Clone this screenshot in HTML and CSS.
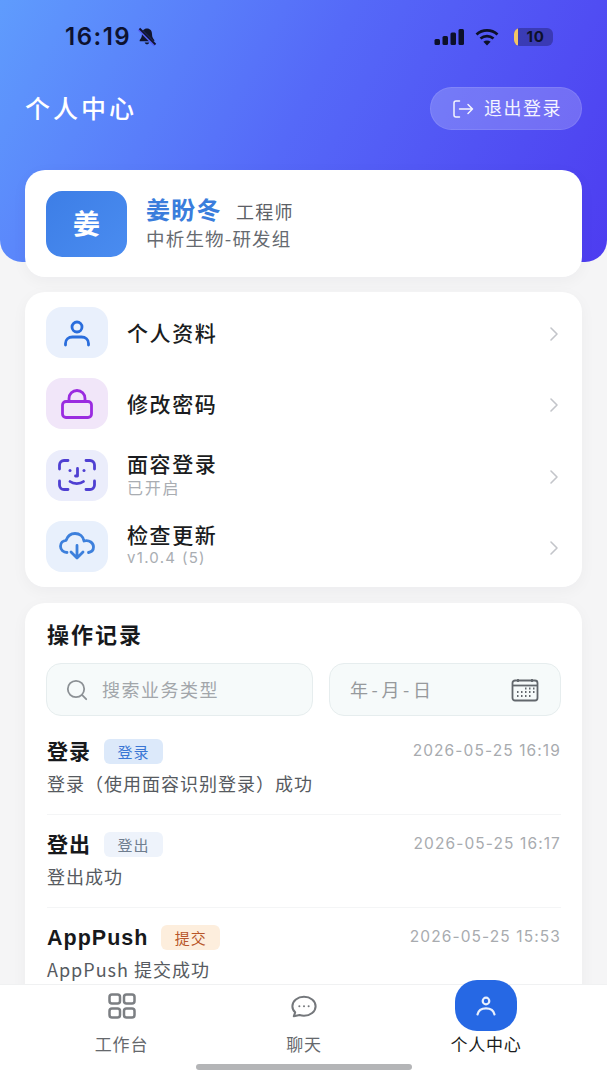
FILE: index.html
```html
<!DOCTYPE html>
<html lang="zh-CN">
<head>
<meta charset="utf-8">
<title>个人中心</title>
<link rel="stylesheet" href="styles.css">
</head>
<body>
<div class="app">
  <header class="hero">
    <div class="status">
      <div class="status-left">
        <span class="clock">16:19</span>
        <svg class="bell" viewBox="0 0 20 20" width="20" height="20"><path d="M10 1.500c-3.200 0-5 2.400-5 5.400 0 3.400-1.300 4.800-2.300 6v1.300h14.600V12.900c-1-1.200-2.300-2.600-2.300-6 0-3-1.800-5.400-5-5.400z" fill="#10152e"/><path d="M7.600 15.600a2.500 2.500 0 0 0 4.800 0z" fill="#10152e"/><path d="M2 2l16 16" stroke="#5560f5" stroke-width="3.600"/><path d="M2.500 1.500l16 16" stroke="#10152e" stroke-width="1.800"/></svg>
      </div>
      <div class="status-right">
        <svg viewBox="0 0 30 18" width="31" height="18" fill="#0c1029"><rect x="0" y="11" width="5.500" height="6" rx="1.500"/><rect x="8" y="8" width="5.500" height="9" rx="1.500"/><rect x="16" y="4.500" width="5.500" height="12.500" rx="1.500"/><rect x="24" y="1" width="5.500" height="16" rx="1.500"/></svg>
        <svg class="wifi" viewBox="0 0 24 18" width="24" height="18" fill="none" stroke="#0c1029" stroke-width="2.800"><path d="M1.500 6.500c6-5.500 15-5.500 21 0"/><path d="M5.500 10.500c3.800-3.300 9.200-3.300 13 0"/><path d="M12 17.500l-3.600-3.800c2-1.700 5.200-1.700 7.200 0z" fill="#0c1029" stroke="none"/></svg>
        <div class="battery"><span class="battery-level"></span><span class="battery-num">10</span></div>
      </div>
    </div>
    <div class="hero-bar">
      <h1 class="hero-title">个人中心</h1>
      <button class="logout">
        <svg viewBox="0 0 22 20" width="22" height="20" fill="none" stroke="#fff" stroke-width="1.500" stroke-linecap="round" stroke-linejoin="round" opacity=".92"><path d="M7.500 2H4a2 2 0 0 0-2 2v12a2 2 0 0 0 2 2h3.500"/><path d="M7.500 10h13M16 5.500l4.500 4.500-4.500 4.500"/></svg>
        <span class="logout-text">退出登录</span>
      </button>
    </div>
  </header>

  <main class="content">
    <section class="card profile">
      <div class="avatar">姜</div>
      <div class="profile-info">
        <div class="profile-name"><strong>姜盼冬</strong><span>工程师</span></div>
        <div class="profile-org">中析生物-研发组</div>
      </div>
    </section>

    <section class="card menu">
      <a class="menu-row">
        <span class="tile tile-blue"><svg viewBox="0 0 28 28" width="28" height="28" fill="none" stroke="#2a6ddc" stroke-width="2.800" stroke-linecap="round"><circle cx="14" cy="8" r="5"/><path d="M2.500 26v-1.500c0-4 3-6.500 7-6.500h9c4 0 7 2.500 7 6.500V26"/></svg></span>
        <span class="menu-text"><span class="menu-label">个人资料</span></span>
        <svg class="chev" viewBox="0 0 10 16" width="10" height="16" fill="none" stroke="#c3c5ca" stroke-width="1.600" stroke-linecap="round" stroke-linejoin="round"><path d="M2 2l6 6-6 6"/></svg>
      </a>
      <a class="menu-row">
        <span class="tile tile-violet"><svg viewBox="0 0 32 30" width="32" height="30" fill="none" stroke="#9a2be0" stroke-width="2.800" stroke-linejoin="round"><rect x="1.500" y="12.500" width="29" height="16" rx="3.500"/><path d="M8 12.500V9.500a8 8 0 0 1 16 0v3"/></svg></span>
        <span class="menu-text"><span class="menu-label">修改密码</span></span>
        <svg class="chev" viewBox="0 0 10 16" width="10" height="16" fill="none" stroke="#c3c5ca" stroke-width="1.600" stroke-linecap="round" stroke-linejoin="round"><path d="M2 2l6 6-6 6"/></svg>
      </a>
      <a class="menu-row">
        <span class="tile tile-indigo"><svg viewBox="0 0 38 32" width="38" height="32" fill="none" stroke="#4f3fd2" stroke-width="2.800" stroke-linecap="round" stroke-linejoin="round"><path d="M1.500 10V6a4.500 4.500 0 0 1 4.500-4.500h4M28 1.500h4A4.500 4.500 0 0 1 36.500 6v4M36.500 22v4a4.500 4.500 0 0 1-4.500 4.500h-4M10 30.500H6A4.500 4.500 0 0 1 1.500 26v-4"/><path d="M19.500 9.500v7.500h-2"/><path d="M12 22.500c3.500 2.800 10 2.800 13.500 0"/><circle cx="12" cy="11.500" r="1.500" fill="#4f3fd2" stroke="none"/><circle cx="26" cy="11.500" r="1.500" fill="#4f3fd2" stroke="none"/></svg></span>
        <span class="menu-text"><span class="menu-label">面容登录</span><span class="menu-sub">已开启</span></span>
        <svg class="chev" viewBox="0 0 10 16" width="10" height="16" fill="none" stroke="#c3c5ca" stroke-width="1.600" stroke-linecap="round" stroke-linejoin="round"><path d="M2 2l6 6-6 6"/></svg>
      </a>
      <a class="menu-row">
        <span class="tile tile-sky"><svg viewBox="0 0 36 28" width="36" height="28" fill="none" stroke="#3d80dc" stroke-width="2.800" stroke-linecap="round" stroke-linejoin="round"><path d="M8 20.500c-3.500 0-6.500-2.500-6.500-6.200 0-3.400 2.600-5.800 5.600-6C8.600 4 12.300 1.500 16 1.500c4.700 0 8.300 3.200 9 7.500 5.500-1.300 9.500 2 9.500 6 0 3-2 5-5 5.500"/><path d="M18 13.500v12M12 20l6 6 6-6"/></svg></span>
        <span class="menu-text"><span class="menu-label">检查更新</span><span class="menu-sub menu-ver">v1.0.4 (5)</span></span>
        <svg class="chev" viewBox="0 0 10 16" width="10" height="16" fill="none" stroke="#c3c5ca" stroke-width="1.600" stroke-linecap="round" stroke-linejoin="round"><path d="M2 2l6 6-6 6"/></svg>
      </a>
    </section>

    <section class="card records">
      <h2 class="records-title">操作记录</h2>
      <div class="filters">
        <div class="field field-search">
          <svg viewBox="0 0 22 22" width="22" height="22" fill="none" stroke="#8c9195" stroke-width="1.800" stroke-linecap="round"><circle cx="10" cy="10" r="8.200"/><path d="M16.200 16.200l4 4"/></svg>
          <span class="placeholder">搜索业务类型</span>
        </div>
        <div class="field field-date">
          <span class="placeholder date-text">年-月-日</span>
          <svg viewBox="0 0 28 24" width="28" height="24" fill="none"><rect x="1.500" y="2.500" width="25" height="20" rx="2.500" stroke="#62676c" stroke-width="1.800"/><path d="M2 7.500h24" stroke="#62676c" stroke-width="1.800"/><path d="M7 1v3M21 1v3" stroke="#62676c" stroke-width="1.800"/><path d="M14 10.500h1.500M18 10.500h1.500M22 10.500h1.500M6 14h1.500M10 14h1.500M14 14h1.500M18 14h1.500M22 14h1.500M6 18h1.500M10 18h1.500M14 18h1.500M18 18h1.500" stroke="#62676c" stroke-width="1.800"/></svg>
        </div>
      </div>
      <ul class="log">
        <li class="log-item">
          <div class="log-head"><b class="log-name">登录</b><span class="tag tag-blue">登录</span><time class="log-time">2026-05-25 16:19</time></div>
          <p class="log-desc">登录（使用面容识别登录）成功</p>
        </li>
        <li class="log-item">
          <div class="log-head"><b class="log-name">登出</b><span class="tag tag-grey">登出</span><time class="log-time">2026-05-25 16:17</time></div>
          <p class="log-desc">登出成功</p>
        </li>
        <li class="log-item">
          <div class="log-head"><b class="log-name log-latin">AppPush</b><span class="tag tag-orange">提交</span><time class="log-time">2026-05-25 15:53</time></div>
          <p class="log-desc">AppPush 提交成功</p>
        </li>
      </ul>
    </section>
  </main>

  <nav class="tabbar">
    <a class="tab">
      <span class="tab-icon"><svg viewBox="0 0 28 26" width="28" height="26" fill="none" stroke="#7c7f83" stroke-width="2.500"><rect x="1.500" y="1.500" width="10.500" height="9" rx="2.500"/><rect x="16" y="1.500" width="10.500" height="9" rx="2.500"/><rect x="1.500" y="15.500" width="10.500" height="9" rx="2.500"/><rect x="16" y="15.500" width="10.500" height="9" rx="2.500"/></svg></span>
      <span class="tab-label">工作台</span>
    </a>
    <a class="tab">
      <span class="tab-icon"><svg viewBox="0 0 28 24" width="26" height="23" fill="none" stroke="#74777b" stroke-width="2.200" stroke-linejoin="round"><path d="M14 1.500c6.800 0 12.500 4.300 12.500 10.200S20.800 22 14 22c-1.800 0-3.300-.3-4.800-.8L3 22.500l1.500-4.200C2.500 16.500 1.500 14.300 1.500 11.700 1.500 5.800 7.200 1.500 14 1.500z"/><circle cx="9" cy="11.700" r="1.100" fill="#74777b" stroke="none"/><circle cx="14" cy="11.700" r="1.100" fill="#74777b" stroke="none"/><circle cx="19" cy="11.700" r="1.100" fill="#74777b" stroke="none"/></svg></span>
      <span class="tab-label">聊天</span>
    </a>
    <a class="tab tab-active">
      <span class="tab-icon"><span class="tab-pill"><svg viewBox="0 0 20 20" width="20" height="20" fill="none" stroke="#e8effc" stroke-width="2.200" stroke-linecap="round"><circle cx="10" cy="5" r="3.300"/><path d="M1.500 18.500c.8-4 4-6.200 8.500-6.200s7.700 2.200 8.500 6.200"/></svg></span></span>
      <span class="tab-label">个人中心</span>
    </a>
    <span class="home-bar"></span>
  </nav>
</div>
</body>
</html>
```

FILE: styles.css
```css
* { box-sizing: border-box; }
html, body { margin: 0; padding: 0; }
body {
  background: #f5f5f6;
  font-family: "Noto Sans CJK SC", "Noto Sans", sans-serif;
  color: #17191c;
}
.app {
  position: relative;
  width: 607px;
  height: 1080px;
  overflow: hidden;
  background: #f5f5f6;
}

/* gradient header */
.hero {
  height: 262px;
  padding: 0 25px;
  background: linear-gradient(118deg, #5f9cfd 0%, #5569f8 48%, #4d3cf0 100%);
  border-radius: 0 0 22px 22px;
}
.status {
  display: flex;
  justify-content: space-between;
  align-items: center;
  height: 28px;
  padding: 23px 29px 0 40px;
  box-sizing: content-box;
}
.status-left, .status-right { display: flex; align-items: center; }
.clock {
  font: 600 24px/28px "Inter", sans-serif;
  letter-spacing: 1.500px;
  color: #0d1230;
}
.bell { margin-left: 6px; }
.status-right { gap: 10px; }
.battery {
  display: flex;
  align-items: center;
  width: 39px;
  height: 18px;
  margin-left: 5px;
  border-radius: 6px;
  background: rgba(40, 40, 130, .55);
  overflow: hidden;
}
.battery-level { width: 4px; height: 100%; background: #f2c566; }
.battery-num {
  flex: 1;
  text-align: center;
  font: 700 15px/18px "Inter", sans-serif;
  letter-spacing: .6px;
  color: #0c1029;
}
.hero-bar {
  display: flex;
  justify-content: space-between;
  align-items: center;
  margin-top: 36px;
}
.hero-title {
  margin: -3px 0 0;
  font-size: 25px;
  font-weight: 500;
  line-height: 30px;
  letter-spacing: 3px;
  color: #fff;
}
.logout {
  display: flex;
  align-items: center;
  gap: 10px;
  width: 152px;
  height: 43px;
  padding: 0 0 0 21px;
  border: 1px solid rgba(255, 255, 255, .1);
  border-radius: 22px;
  background: rgba(255, 255, 255, .2);
  color: #f4f4ff;
  font-family: inherit;
  font-size: 18px;
  letter-spacing: 1.500px;
}
.logout-text { margin-top: -3px; }

/* cards */
.content {
  display: flex;
  flex-direction: column;
  gap: 15px;
  margin-top: -92px;
  padding: 0 25px;
}
.card {
  background: #fff;
  border-radius: 20px;
  box-shadow: 0 4px 16px rgba(20, 30, 60, .04);
}
.profile {
  display: flex;
  align-items: center;
  gap: 19px;
  height: 107px;
  padding: 0 21px;
}
.avatar {
  display: flex;
  align-items: center;
  justify-content: center;
  width: 81px;
  height: 66px;
  padding-bottom: 2px;
  border-radius: 16px;
  background: linear-gradient(135deg, #3d7ee6, #4a8cf0);
  color: #fff;
  font-size: 27px;
  font-weight: 700;
}
.profile-info { margin-bottom: 2px; }
.profile-name { display: flex; align-items: baseline; gap: 14px; height: 30px; line-height: 30px; }
.profile-name strong {
  font-size: 24px;
  font-weight: 700;
  letter-spacing: 1.300px;
  color: #3a7ddc;
}
.profile-name span {
  font-size: 18px;
  letter-spacing: 1.300px;
  color: #5c6066;
}
.profile-org {
  margin-top: 1px;
  font-size: 18.500px;
  line-height: 26px;
  letter-spacing: 1.200px;
  color: #666a70;
}

.menu {
  display: flex;
  flex-direction: column;
  gap: 20.300px;
  height: 295px;
  padding: 15px 21px;
}
.menu-row {
  display: flex;
  align-items: center;
  height: 51px;
}
.tile {
  display: flex;
  flex: none;
  align-items: center;
  justify-content: center;
  width: 62px;
  height: 51px;
  margin-right: 19px;
  border-radius: 16px;
}
.tile-blue { background: #e9f0fc; }
.tile-violet { background: #f1e6f9; }
.tile-indigo { background: #ebedfb; }
.tile-sky { background: #e8f0fc; }
.menu-text {
  display: flex;
  flex: 1;
  flex-direction: column;
  gap: 2px;
  margin-bottom: 2px;
}
.menu-label {
  font-size: 21px;
  font-weight: 500;
  line-height: 24px;
  letter-spacing: 1.600px;
  color: #1a1c20;
}
.menu-sub {
  font-size: 16px;
  line-height: 20px;
  letter-spacing: 1.700px;
  color: #a9adb2;
}
.menu-ver {
  font-family: "Inter", sans-serif;
  font-size: 15px;
  letter-spacing: 1.300px;
}
.chev { flex: none; margin: 3px 2px 0 0; }

/* operation log */
.records {
  height: 440px;
  margin-top: 1px;
  padding: 15px 21px 0 22px;
}
.records-title {
  margin: 0;
  font-size: 22px;
  font-weight: 700;
  line-height: 30px;
  letter-spacing: 2px;
  color: #17191c;
}
.filters {
  display: flex;
  gap: 16px;
  margin: 15px 0 6px -1px;
}
.field {
  display: flex;
  align-items: center;
  height: 53px;
  border: 1px solid #e6edee;
  border-radius: 15px;
  background: #f6fafa;
}
.field-search { width: 267px; gap: 14px; padding-left: 19px; }
.field-date { flex: 1; justify-content: space-between; padding: 0 21px 0 20px; }
.placeholder {
  margin-top: -2px;
  font-size: 18px;
  letter-spacing: 1.500px;
  color: #a2a6aa;
}
.date-text { color: #96999c; letter-spacing: 3.600px; }
.log { margin: 0; padding: 0; list-style: none; }
.log-item {
  height: 93px;
  padding-top: 15px;
  border-bottom: 1px solid #f4f5f6;
}
.log-item:last-child { border-bottom: 0; }
.log-head { display: flex; align-items: center; height: 28px; }
.log-name {
  margin-bottom: 2px;
  font-size: 21px;
  font-weight: 700;
  line-height: 28px;
  letter-spacing: 1px;
  color: #17191c;
}
.log-latin {
  margin: 2px 0 0;
  font-family: "Liberation Sans", sans-serif;
  font-size: 21.500px;
}
.tag {
  display: flex;
  align-items: center;
  justify-content: center;
  width: 59px;
  height: 25px;
  margin-left: 13px;
  border-radius: 6px;
  font-size: 15px;
  letter-spacing: 1px;
}
.tag-blue { background: #dce9fa; color: #3a76d4; }
.tag-grey { background: #eef3fb; color: #6f7d8e; }
.tag-orange { background: #fdeedd; color: #b8562a; }
.log-time {
  margin: 0 0 1px auto;
  font: 400 15.500px/20px "Inter", sans-serif;
  letter-spacing: 1.100px;
  color: #a8abaf;
}
.log-desc {
  margin: 6px 0 0;
  font-size: 18px;
  line-height: 24px;
  letter-spacing: 1px;
  color: #565a60;
}

/* bottom navigation */
.tabbar {
  position: absolute;
  left: 0;
  right: 0;
  bottom: 0;
  display: grid;
  grid-template-columns: 243px 122px 242px;
  height: 96px;
  border-top: 1px solid #f0f1f2;
  background: #fff;
}
.tab { display: flex; flex-direction: column; align-items: center; }
.tab-icon {
  display: flex;
  align-items: center;
  justify-content: center;
  height: 42px;
}
.tab-label {
  margin-top: 5px;
  font-size: 17px;
  line-height: 24px;
  letter-spacing: .8px;
  color: #65686c;
}
.tab-active .tab-label { color: #1b1d21; }
.tab-pill {
  display: flex;
  align-items: center;
  justify-content: center;
  width: 62px;
  height: 51px;
  margin-top: -1px;
  border-radius: 22px;
  background: #2668e4;
}
.home-bar {
  position: absolute;
  left: 196px;
  bottom: 10px;
  width: 216px;
  height: 6px;
  border-radius: 3px;
  background: #b4b5b7;
}
```
